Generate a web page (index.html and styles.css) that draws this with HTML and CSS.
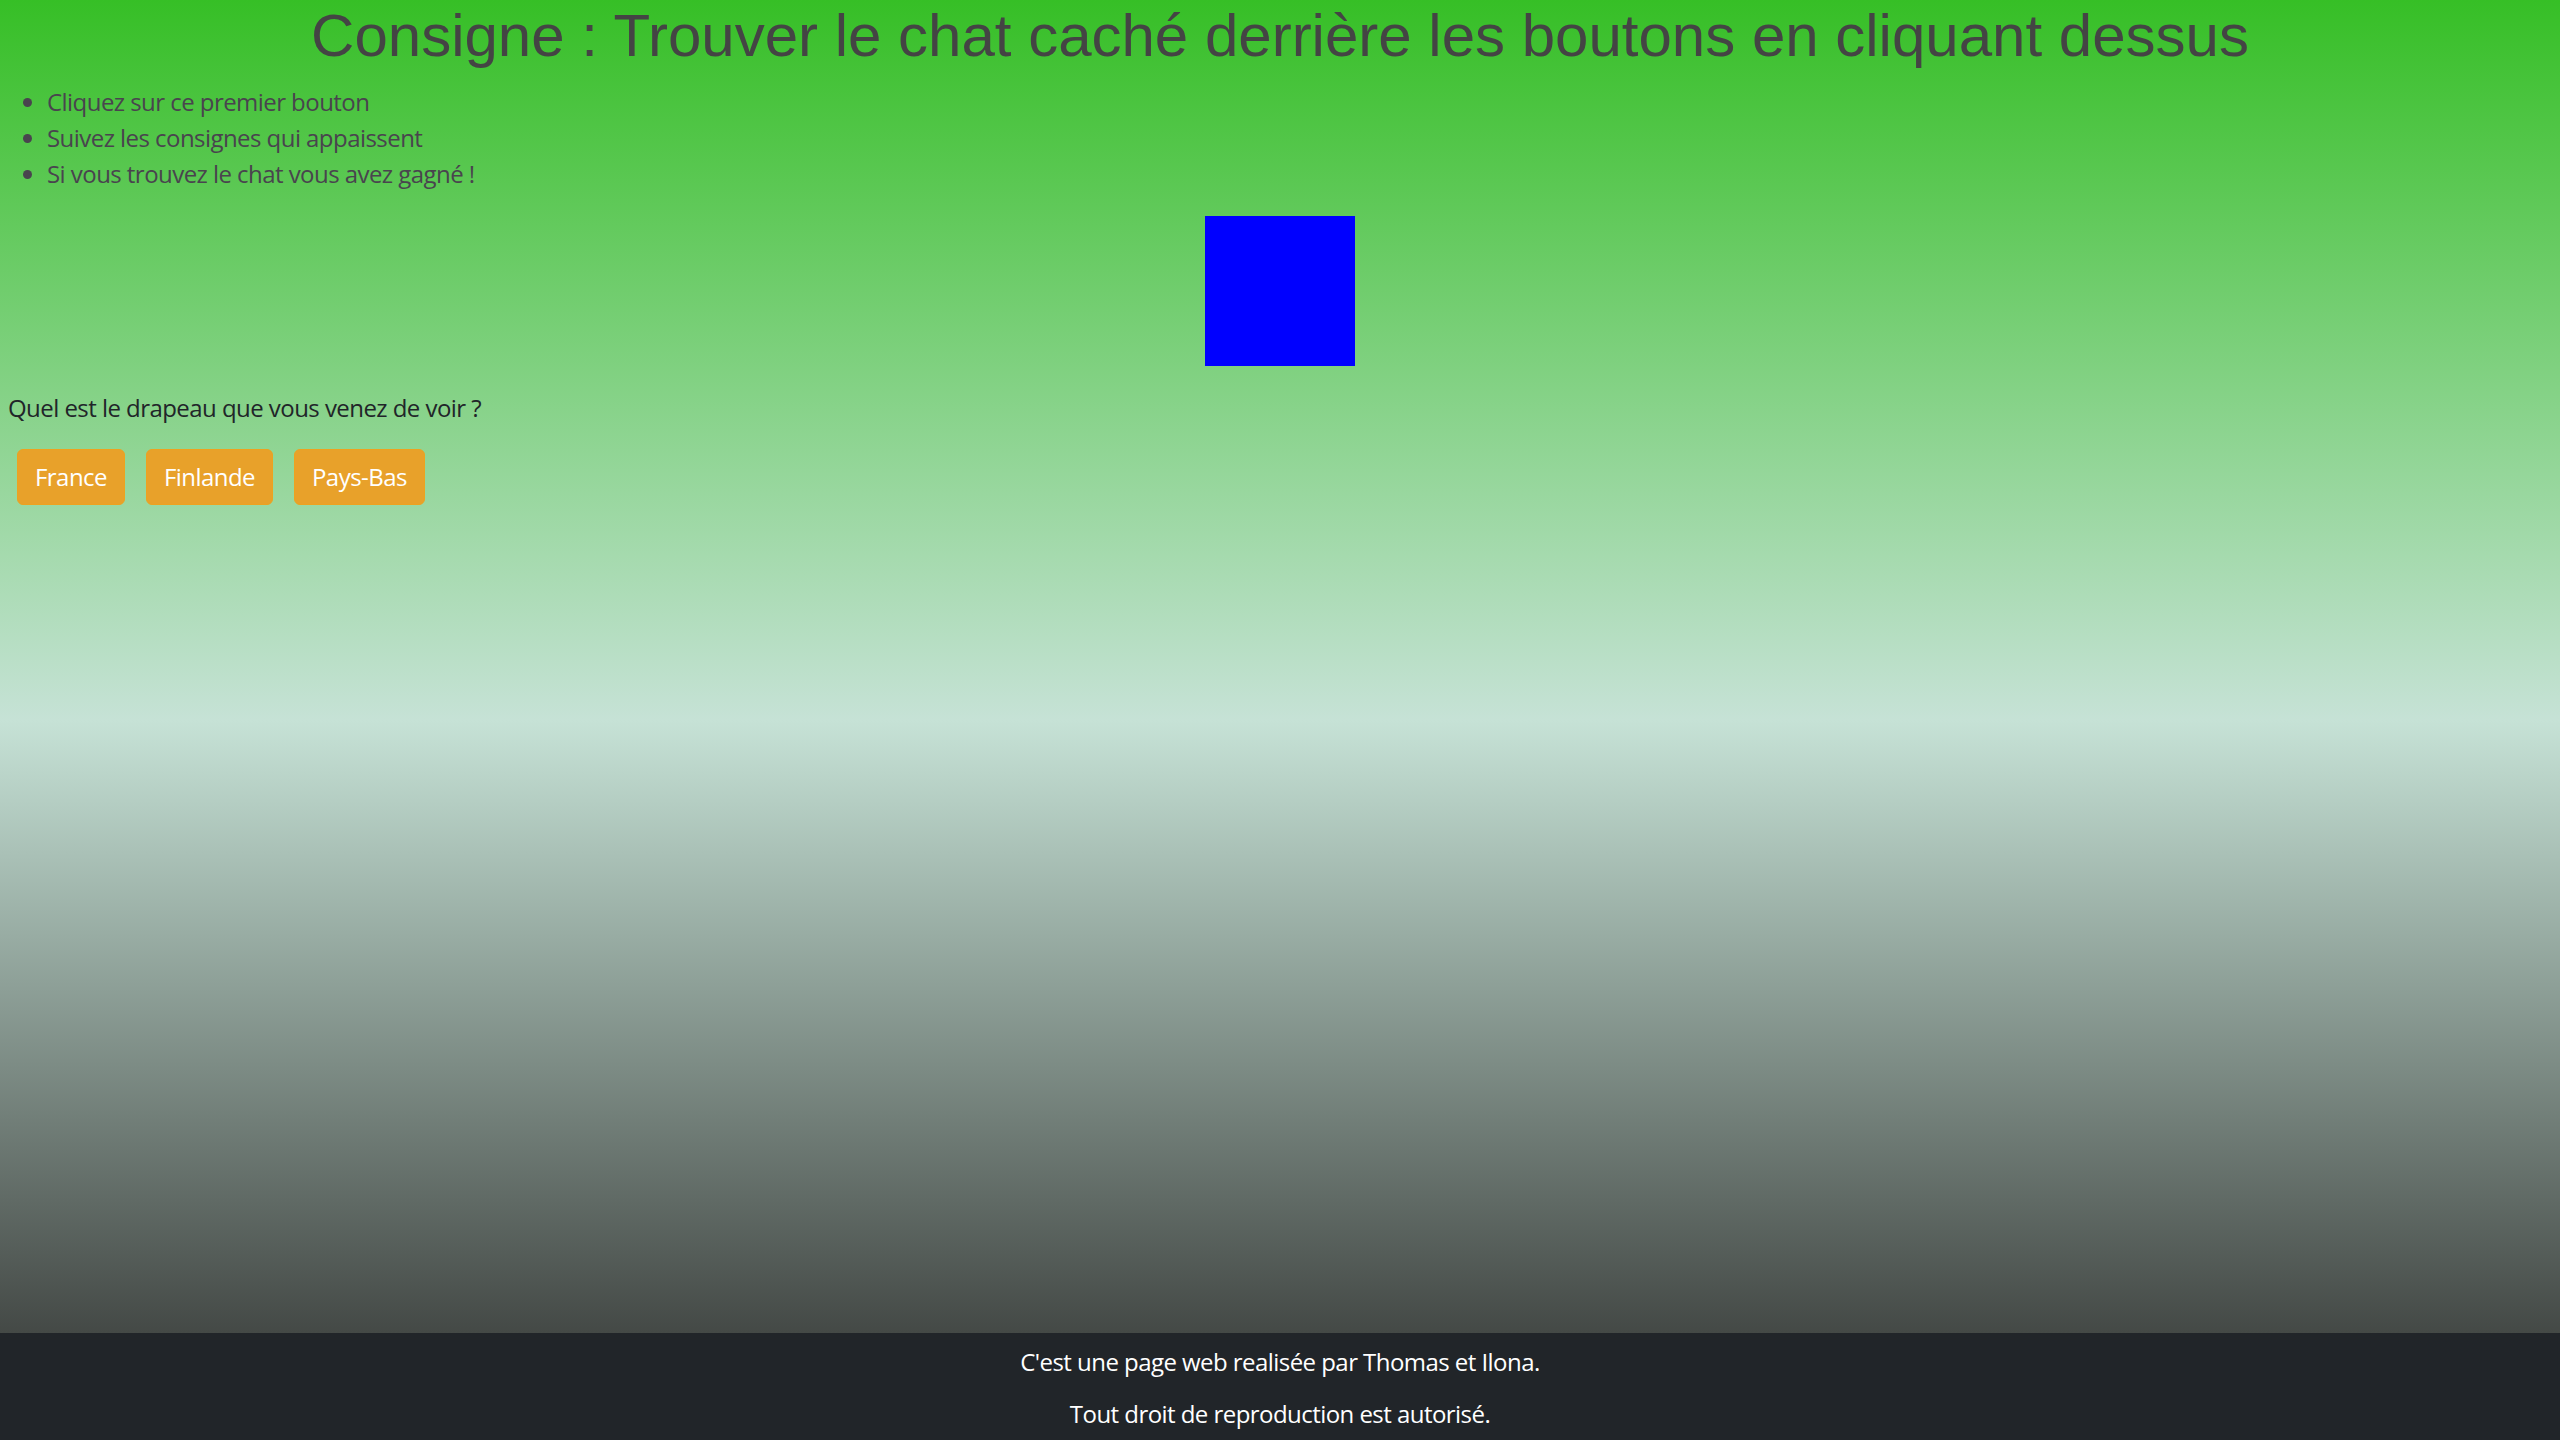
FILE: index.html
```html
<!DOCTYPE html>
<html lang="fr">
<head>
<meta charset="utf-8">
<title>Trouver le chat</title>
<link rel="stylesheet" href="styles.css">
</head>
<body>
<div class="page">
  <main class="main">
    <h1 class="title">Consigne : Trouver le chat caché derrière les boutons en cliquant dessus</h1>
    <ul class="rules">
      <li>Cliquez sur ce premier bouton</li>
      <li>Suivez les consignes qui appaissent</li>
      <li>Si vous trouvez le chat vous avez gagné !</li>
    </ul>
    <div class="flag-row"><div class="flag"></div></div>
    <p class="question">Quel est le drapeau que vous venez de voir ?</p>
    <div class="answers">
      <button class="btn">France</button>
      <button class="btn">Finlande</button>
      <button class="btn">Pays-Bas</button>
    </div>
  </main>
  <footer class="footer">
    <p>C'est une page web realisée par Thomas et Ilona.</p>
    <p>Tout droit de reproduction est autorisé.</p>
  </footer>
</div>
</body>
</html>
```
FILE: styles.css
```css
html, body {
  margin: 0;
  padding: 0;
  height: 100%;
}
body {
  font-family: "Open Sans", "Noto Sans", sans-serif;
  font-size: 24px;
  line-height: 36px;
  letter-spacing: -0.55px;
  color: #212529;
}
.page {
  min-height: 1440px;
  display: flex;
  flex-direction: column;
}
.main {
  flex: 1;
  background: linear-gradient(to bottom, #36bf26 0px, #c6e2d6 720px, #444946 1333px);
}
.title {
  margin: 0 0 12px;
  font-family: "Liberation Sans", Arial, sans-serif;
  font-weight: 400;
  font-size: 60px;
  line-height: 72px;
  letter-spacing: 0;
  color: #444;
  text-align: center;
}
.rules {
  margin: 0 0 24px;
  padding-left: 47px;
  color: #49444e;
}
.flag-row {
  display: flex;
  justify-content: center;
}
.flag {
  width: 150px;
  height: 150px;
  background: #0000ff;
}
.question {
  margin: 24px 0 23px 8px;
}
.answers {
  display: flex;
  gap: 21px;
  padding-left: 17px;
}
.btn {
  font-family: inherit;
  font-size: 24px;
  line-height: 36px;
  letter-spacing: -0.55px;
  padding: 9px 17px;
  border: 1px solid #eda21f;
  border-radius: 6px;
  background: #e8a12a;
  color: #fff;
  cursor: pointer;
}
.footer {
  height: 107px;
  box-sizing: border-box;
  padding-top: 11px;
  background: #212529;
  color: #fff;
  text-align: center;
}
.footer p {
  margin: 0 0 16px;
}
```
